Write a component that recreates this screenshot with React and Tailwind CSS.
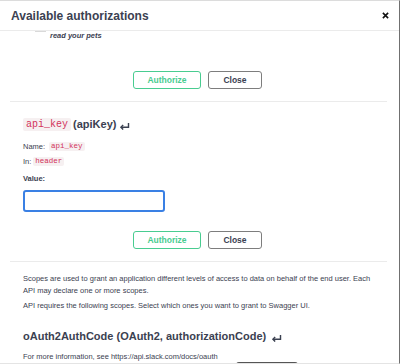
import React from 'react';

const ReturnArrow = ({ className }) => (
  <svg viewBox="0 0 12 9" className={className} fill="none" stroke="currentColor" strokeWidth="1.6">
    <path d="M10.5 1 V6 H2" />
    <path d="M4.5 3.5 L2 6 L4.5 8.5" />
  </svg>
);

const ButtonRow = () => (
  <div className="flex justify-center gap-[7px] pr-[4px]">
    <button className="w-[68px] h-[18px] border-[1.5px] border-[#49cc90] rounded-[3px] text-[8.5px] font-bold text-[#49cc90]">
      Authorize
    </button>
    <button className="w-[54px] h-[18px] border-[1.5px] border-[#7d7d7d] rounded-[3px] text-[8.5px] font-bold text-[#3b4151]">
      Close
    </button>
  </div>
);

const Divider = () => <div className="ml-[10px] w-[377px] h-px bg-[#ebebeb]" />;

const Code = ({ children }) => (
  <code className="px-[2px] rounded-[2px] bg-[#f6f0f1] text-[#d2335b] font-['Liberation_Mono',monospace] text-[7.5px] leading-[9px]">
    {children}
  </code>
);

export default function App() {
  return (
    <div className="w-[400px] h-[364px] flex flex-col bg-white border-t border-t-[#dcdcdc] border-r border-r-[#707070] border-b border-b-[#e4e4e4] overflow-hidden font-['Liberation_Sans',Arial,sans-serif] text-[#3b4151]">
      <div className="h-[30px] shrink-0 flex items-center justify-between pl-[11px] pr-[10px] border-b border-[#ebebeb]">
        <h3 className="text-[12px] font-bold leading-none pt-px">Available authorizations</h3>
        <svg viewBox="0 0 8 8" className="w-[7px] h-[7px] text-[#111]" stroke="currentColor" strokeWidth="1.8">
          <path d="M1 1 L7 7 M7 1 L1 7" />
        </svg>
      </div>

      <div className="flex-1 overflow-hidden">
        <div className="flex items-start pl-[35px] gap-[4px]">
          <span className="w-[11px] h-px bg-[#d9d9d9]" />
          <span className="mt-[1px] text-[7.5px] leading-[8px] font-bold italic">read your pets</span>
        </div>

        <div className="mt-[31px]">
          <ButtonRow />
        </div>
        <div className="mt-[12px]">
          <Divider />
        </div>

        <div className="pl-[23px]">
          <div className="mt-[16px] h-[13px] flex items-center gap-[2px]">
            <code className="px-[3px] rounded-[2px] bg-[#f6f0f1] text-[#d2335b] font-['Liberation_Mono',monospace] text-[10px] leading-[13px]">
              api_key
            </code>
            <span className="text-[11px] font-bold">(apiKey)</span>
            <ReturnArrow className="w-[11px] h-[8px] ml-[1px] mt-[2px]" />
          </div>

          <div className="mt-[11px] h-[9px] flex items-center text-[7.5px] gap-[4px]">
            <span>Name:</span>
            <Code>api_key</Code>
          </div>
          <div className="mt-[6px] h-[9px] flex items-center text-[7.5px] gap-[2px]">
            <span>In:</span>
            <Code>header</Code>
          </div>
          <div className="mt-[9px] h-[8px] text-[7.5px] leading-[8px] font-bold">Value:</div>
          <input
            type="text"
            className="block mt-[7px] w-[142px] h-[22px] border-2 border-[#3a80e4] rounded-[3px] outline-none"
          />
        </div>

        <div className="mt-[19px]">
          <ButtonRow />
        </div>
        <div className="mt-[12px]">
          <Divider />
        </div>

        <div className="pl-[23px] w-[377px]">
          <p className="mt-[11px] text-[7.5px] leading-[12px]">
            Scopes are used to grant an application different levels of access to data on behalf of the end user. Each
            API may declare one or more scopes.
          </p>
          <p className="mt-[3px] text-[7.5px] leading-[12px]">
            API requires the following scopes. Select which ones you want to grant to Swagger UI.
          </p>
          <h4 className="mt-[18px] flex items-center gap-[5px] text-[11px] leading-[13px] font-bold">
            oAuth2AuthCode (OAuth2, authorizationCode)
            <ReturnArrow className="w-[11px] h-[8px] mt-[2px]" />
          </h4>
          <p className="mt-[8px] text-[7.5px] leading-[12px]">
            For more information, see https://api.slack.com/docs/oauth
          </p>
        </div>
        <div className="pl-[236px] mt-[-1px]">
          <div className="w-[62px] h-[18px] border-2 border-[#555] rounded-[3px]" />
        </div>
      </div>
    </div>
  );
}
